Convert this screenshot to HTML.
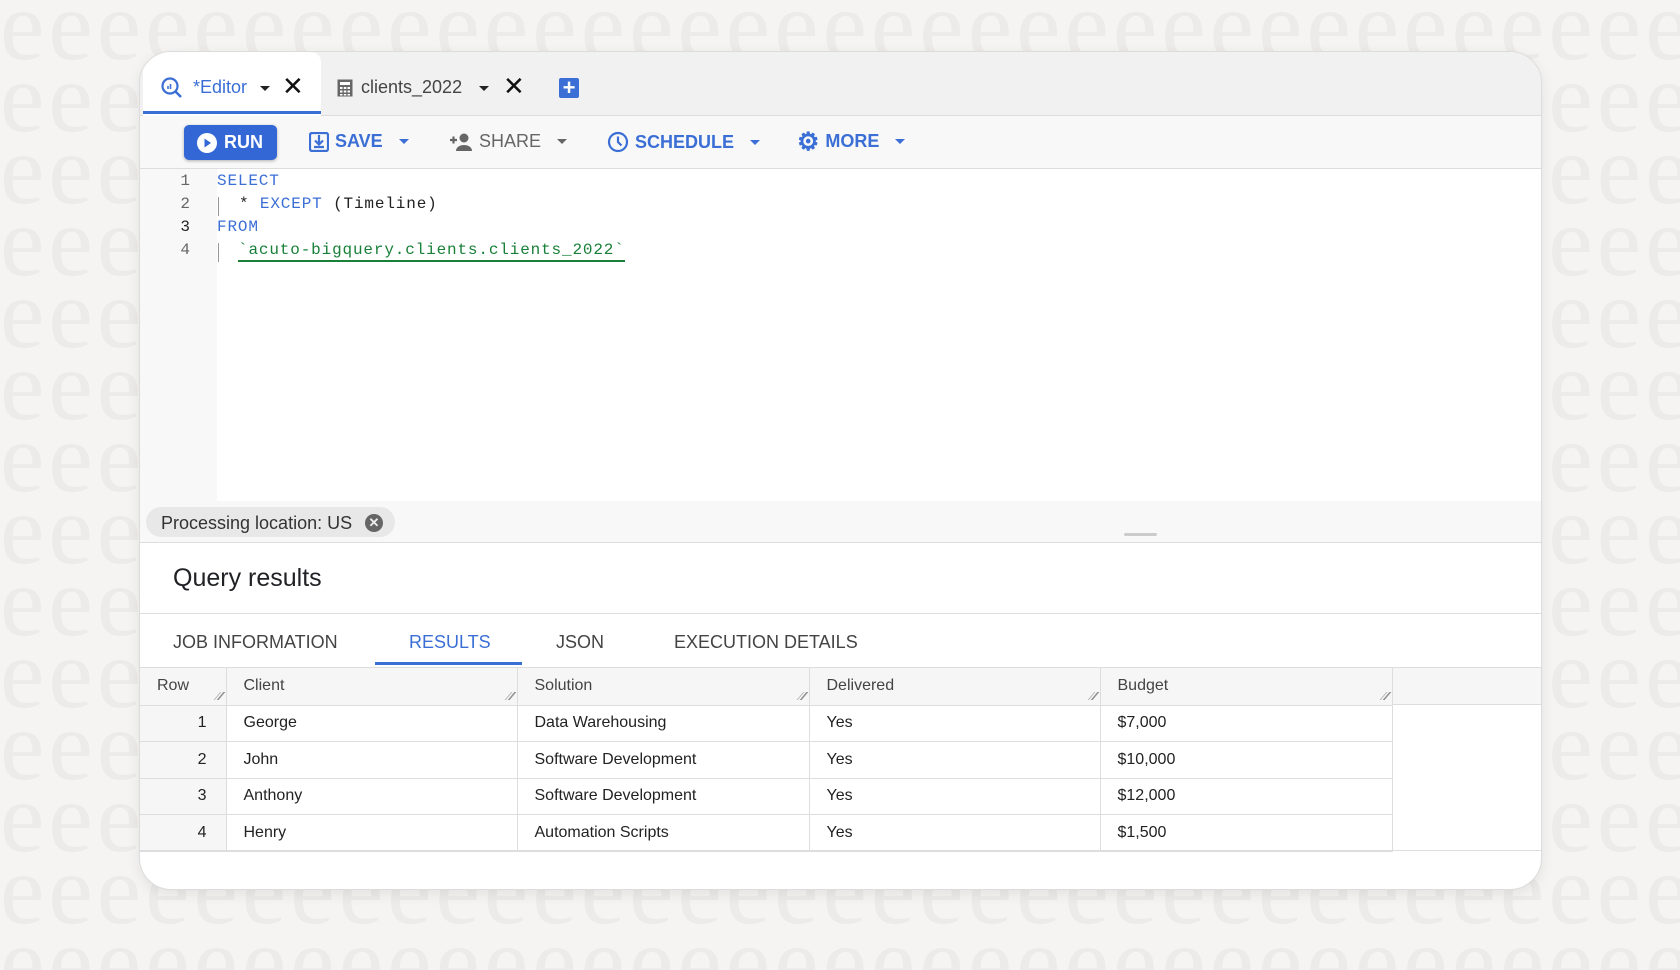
<!DOCTYPE html>
<html><head><meta charset="utf-8"><style>
*{box-sizing:border-box;margin:0;padding:0}
body{width:1680px;height:945px;overflow:hidden;background:#f5f4f3;font-family:"Liberation Sans",sans-serif;position:relative}
.bgp{position:absolute;left:0;top:-10px;width:1700px;height:980px;overflow:hidden;color:#edebe9;font-family:"Liberation Serif",serif;font-size:100px;line-height:72px;letter-spacing:4px;word-break:break-all;white-space:normal}
.card{position:absolute;left:139px;top:51px;width:1403px;height:839px;background:#fff;border:1px solid #dcdcdc;border-radius:32px;overflow:hidden;box-shadow:0 4px 14px rgba(0,0,0,.08)}
.abs{position:absolute}
.tabbar{left:0;top:0;width:100%;height:64px;background:#f1f1f1;border-bottom:1px solid #ddd}
.toolbar{left:0;top:64px;width:100%;height:53px;background:#f8f8f8;border-bottom:1px solid #ddd}
.tb{position:absolute;top:15px;font-size:18px;font-weight:bold;color:#3b6fd6;display:flex;align-items:center;gap:6px}
.caret{display:inline-block;width:0;height:0;border-left:5px solid transparent;border-right:5px solid transparent;border-top:5px solid currentColor;margin-left:10px}
.editor{left:0;top:117px;width:100%;height:332px;background:#fff}
.gutter{left:0;top:0;width:77px;height:100%;background:#f8f8f8}
.code{font-family:"Liberation Mono",monospace;font-size:16px;letter-spacing:.85px;color:#222}
.ln{position:absolute;width:50px;text-align:right;color:#666;font-family:"Liberation Mono",monospace;font-size:16px}
.kw{color:#3b6fd6}
.proc{left:0;top:449px;width:100%;height:42px;background:#f8f8f8;border-bottom:1px solid #ddd}
th,td{font-size:16px;text-align:left;font-weight:normal}
table{border-collapse:collapse;position:absolute;left:0;top:616px}
th{height:37px;background:#f6f6f6;color:#444;border-right:1px solid #ddd;border-bottom:1px solid #ddd;padding-left:17px;position:relative}
td{height:36.5px;color:#222;border-right:1px solid #ddd;border-bottom:1px solid #ddd;padding-left:17px}
td.r{text-align:right;padding-right:19px;padding-left:0;background:#f6f6f6}
th .rs{position:absolute;right:4px;bottom:5px;height:8px;border-right:2px solid #777;transform:skewX(-40deg);border-left:1px solid #999;opacity:.8;width:5px}
</style></head><body>
<div class="bgp">eeeeeeeeeeeeeeeeeeeeeeeeeeeeeeeeeeeeeeeeeeeeeeeeeeeeeeeeeeeeeeeeeeeeeeeeeeeeeeeeeeeeeeeeeeeeeeeeeeeeeeeeeeeeeeeeeeeeeeeeeeeeeeeeeeeeeeeeeeeeeeeeeeeeeeeeeeeeeeeeeeeeeeeeeeeeeeeeeeeeeeeeeeeeeeeeeeeeeeeeeeeeeeeeeeeeeeeeeeeeeeeeeeeeeeeeeeeeeeeeeeeeeeeeeeeeeeeeeeeeeeeeeeeeeeeeeeeeeeeeeeeeeeeeeeeeeeeeeeeeeeeeeeeeeeeeeeeeeeeeeeeeeeeeeeeeeeeeeeeeeeeeeeeeeeeeeeeeeeeeeeeeeeeeeeeeeeeeeeeeeeeeeeeeeeeeeeeeeeeeeeeeeeeeeeeeeeeeeeeeeeeeeeeeeeeeeeeeeeeeeeeeeeeeeeeeeeeeeeeeeeeeeeeeeeeeeeeeeeeeeeeeeeeeeeeeeeeeeeeeeeeeeeeeeeeeeeeeeeeeeeeeeeeeeeeeeeeeeeeeeeeeeeeeeeeeeeeeeeeeeeeeeeeeeeeeeeeeeeeeeeeeeeeeeeeeeeeeeeeeeeeeeeeeeeeeeeeeeeeeeeeeeeeeeeeeeeeeeeeeeeeeeeeeeeeeeeeeeeeeeeeeeeeeeeeeeeeeeeeeeeeeeeeeeeeeeeeeeeeeeeeeeeeeeeeeeeeeeeeeeeeeeeeeeeeeeeeeeeeeeeeeeeeeeeeeeeeeeeeeeeeeeeeeeeeeeeeeeeeeeeeeeeeeeeeeeeeeeeeeeeeeeeeeeeeeeeeeeeeeeeeee</div>
<div class="card">
 <div class="abs tabbar">
  <div class="abs" style="left:3px;top:0;width:178px;height:64px;background:#fff;border-top-right-radius:10px"></div>
  <div class="abs" style="left:3px;top:59px;width:178px;height:3px;background:#3b6fd6"></div>
  <svg class="abs" style="left:20px;top:24px" width="24" height="24" viewBox="0 0 24 24"><circle cx="10" cy="10" r="7.5" fill="none" stroke="#3b6fd6" stroke-width="2.2"/><path d="M15.5 15.5L21 21" stroke="#3b6fd6" stroke-width="2.5"/><path d="M8 13v-3M10.5 13V8" stroke="#3b6fd6" stroke-width="1.6"/></svg>
  <div class="abs" style="left:53px;top:25px;font-size:18px;color:#3b6fd6">*Editor</div>
  <div class="abs" style="left:120px;top:34px;border-left:5px solid transparent;border-right:5px solid transparent;border-top:5px solid #222"></div>
  <div class="abs" style="left:142px;top:19px;font-size:26px;color:#111">✕</div>
  <svg class="abs" style="left:197px;top:27px" width="16" height="18" viewBox="0 0 16 18"><rect x="0.5" y="0.5" width="15" height="17" fill="#666"/><rect x="3" y="3" width="10" height="3" fill="#fff"/><g fill="#fff"><rect x="3" y="8" width="2.5" height="2"/><rect x="6.8" y="8" width="2.5" height="2"/><rect x="10.5" y="8" width="2.5" height="2"/><rect x="3" y="11.5" width="2.5" height="2"/><rect x="6.8" y="11.5" width="2.5" height="2"/><rect x="10.5" y="11.5" width="2.5" height="2"/><rect x="3" y="15" width="2.5" height="1.5"/><rect x="6.8" y="15" width="2.5" height="1.5"/><rect x="10.5" y="15" width="2.5" height="1.5"/></g></svg>
  <div class="abs" style="left:221px;top:25px;font-size:18px;color:#444">clients_2022</div>
  <div class="abs" style="left:339px;top:34px;border-left:5px solid transparent;border-right:5px solid transparent;border-top:5px solid #222"></div>
  <div class="abs" style="left:363px;top:19px;font-size:26px;color:#111">✕</div>
  <div class="abs" style="left:419px;top:26px;width:20px;height:20px;background:#3b6fd6;border-radius:2px;color:#fff;font-size:22px;line-height:19px;text-align:center;font-weight:bold">+</div>
 </div>
 <div class="abs toolbar">
  <div class="abs" style="left:44px;top:9px;width:93px;height:35px;background:#3367d6;border-radius:5px;box-shadow:0 1px 3px rgba(0,0,0,.3);color:#fff;font-weight:bold;font-size:18px;display:flex;align-items:center;padding-left:13px;gap:7px"><svg width="20" height="20" viewBox="0 0 20 20"><circle cx="10" cy="10" r="10" fill="#fff"/><path d="M7.5 5.5L14 10 7.5 14.5z" fill="#3367d6"/></svg>RUN</div>
  <div class="tb" style="left:169px"><svg width="20" height="20" viewBox="0 0 20 20"><rect x="1" y="1" width="18" height="18" rx="2" fill="none" stroke="#3b6fd6" stroke-width="2.2"/><path d="M10 3v9M6 8.5l4 4 4-4M5 15h10" stroke="#3b6fd6" stroke-width="2.2" fill="none"/></svg>SAVE<span class="caret"></span></div>
  <div class="tb" style="left:309px;color:#666;font-weight:normal"><svg width="24" height="20" viewBox="0 0 24 20"><path d="M1 8h7M4.5 4.5v7" stroke="#666" stroke-width="2.2"/><circle cx="15" cy="6" r="4.5" fill="#666"/><path d="M7 19c0-4 4-6 8-6s8 2 8 6z" fill="#666"/></svg>SHARE<span class="caret"></span></div>
  <div class="tb" style="left:467px"><svg width="22" height="22" viewBox="0 0 22 22"><circle cx="11" cy="11" r="9" fill="none" stroke="#3b6fd6" stroke-width="2.2"/><path d="M11 5.5V11l3.5 3.5" stroke="#3b6fd6" stroke-width="2.2" fill="none"/></svg>SCHEDULE<span class="caret"></span></div>
  <div class="tb" style="left:657px"><span style="font-size:25px;line-height:20px">⚙</span>MORE<span class="caret"></span></div>
 </div>
 <div class="abs editor">
  <div class="abs gutter"></div>
  <div class="ln" style="left:0;top:3px">1</div>
  <div class="ln" style="left:0;top:26px">2</div>
  <div class="ln" style="left:0;top:49px;color:#222">3</div>
  <div class="ln" style="left:0;top:72px">4</div>
  <div class="abs" style="left:78px;top:28px;width:1px;height:19px;background:#999"></div>
  <div class="abs" style="left:78px;top:74px;width:1px;height:19px;background:#999"></div>
  <div class="abs code kw" style="left:77px;top:3px">SELECT</div>
  <div class="abs code" style="left:99px;top:26px">* <span class="kw">EXCEPT</span> (Timeline)</div>
  <div class="abs code kw" style="left:77px;top:49px">FROM</div>
  <div class="abs code" style="left:98px;top:72px;color:#188038;border-bottom:2px solid #188038;padding-bottom:1px">`acuto-bigquery.clients.clients_2022`</div>
 </div>
 <div class="abs proc">
  <div class="abs" style="left:6px;top:6px;width:249px;height:30px;background:#e8e8e8;border-radius:15px;font-size:18px;color:#333;padding:6px 0 0 15px">Processing location: US</div>
  <div class="abs" style="left:225px;top:13px;width:18px;height:18px;border-radius:50%;background:#666;color:#eee;font-size:13px;line-height:18px;text-align:center;font-weight:bold">✕</div>
  <div class="abs" style="left:984px;top:32px;width:33px;height:3px;border-radius:2px;background:#ccc"></div>
 </div>
 <div class="abs" style="left:33px;top:512px;font-size:25px;color:#202124">Query results</div>
 <div class="abs" style="left:0;top:561px;width:100%;height:1px;background:#ddd"></div>
 <div class="abs" style="left:33px;top:580px;font-size:18px;color:#444">JOB INFORMATION</div>
 <div class="abs" style="left:269px;top:580px;font-size:18px;color:#3b6fd6">RESULTS</div>
 <div class="abs" style="left:235px;top:610px;width:147px;height:3px;background:#3b6fd6"></div>
 <div class="abs" style="left:416px;top:580px;font-size:18px;color:#444">JSON</div>
 <div class="abs" style="left:534px;top:580px;font-size:18px;color:#444">EXECUTION DETAILS</div>
 <div class="abs" style="left:0;top:615px;width:100%;height:38px;background:#f6f6f6;border-top:1px solid #ddd;border-bottom:1px solid #ddd"></div>
 <table>
  <tr><th style="width:86px">Row<span class="rs"></span></th><th style="width:291px">Client<span class="rs"></span></th><th style="width:292px">Solution<span class="rs"></span></th><th style="width:291px">Delivered<span class="rs"></span></th><th style="width:292px">Budget<span class="rs"></span></th></tr>
  <tr><td class="r">1</td><td>George</td><td>Data Warehousing</td><td>Yes</td><td>$7,000</td></tr>
  <tr><td class="r">2</td><td>John</td><td>Software Development</td><td>Yes</td><td>$10,000</td></tr>
  <tr><td class="r">3</td><td>Anthony</td><td>Software Development</td><td>Yes</td><td>$12,000</td></tr>
  <tr><td class="r">4</td><td>Henry</td><td>Automation Scripts</td><td>Yes</td><td>$1,500</td></tr>
 </table>
 <div class="abs" style="left:0;top:798px;width:100%;height:1px;background:#ddd"></div>
</div>
</body></html>
